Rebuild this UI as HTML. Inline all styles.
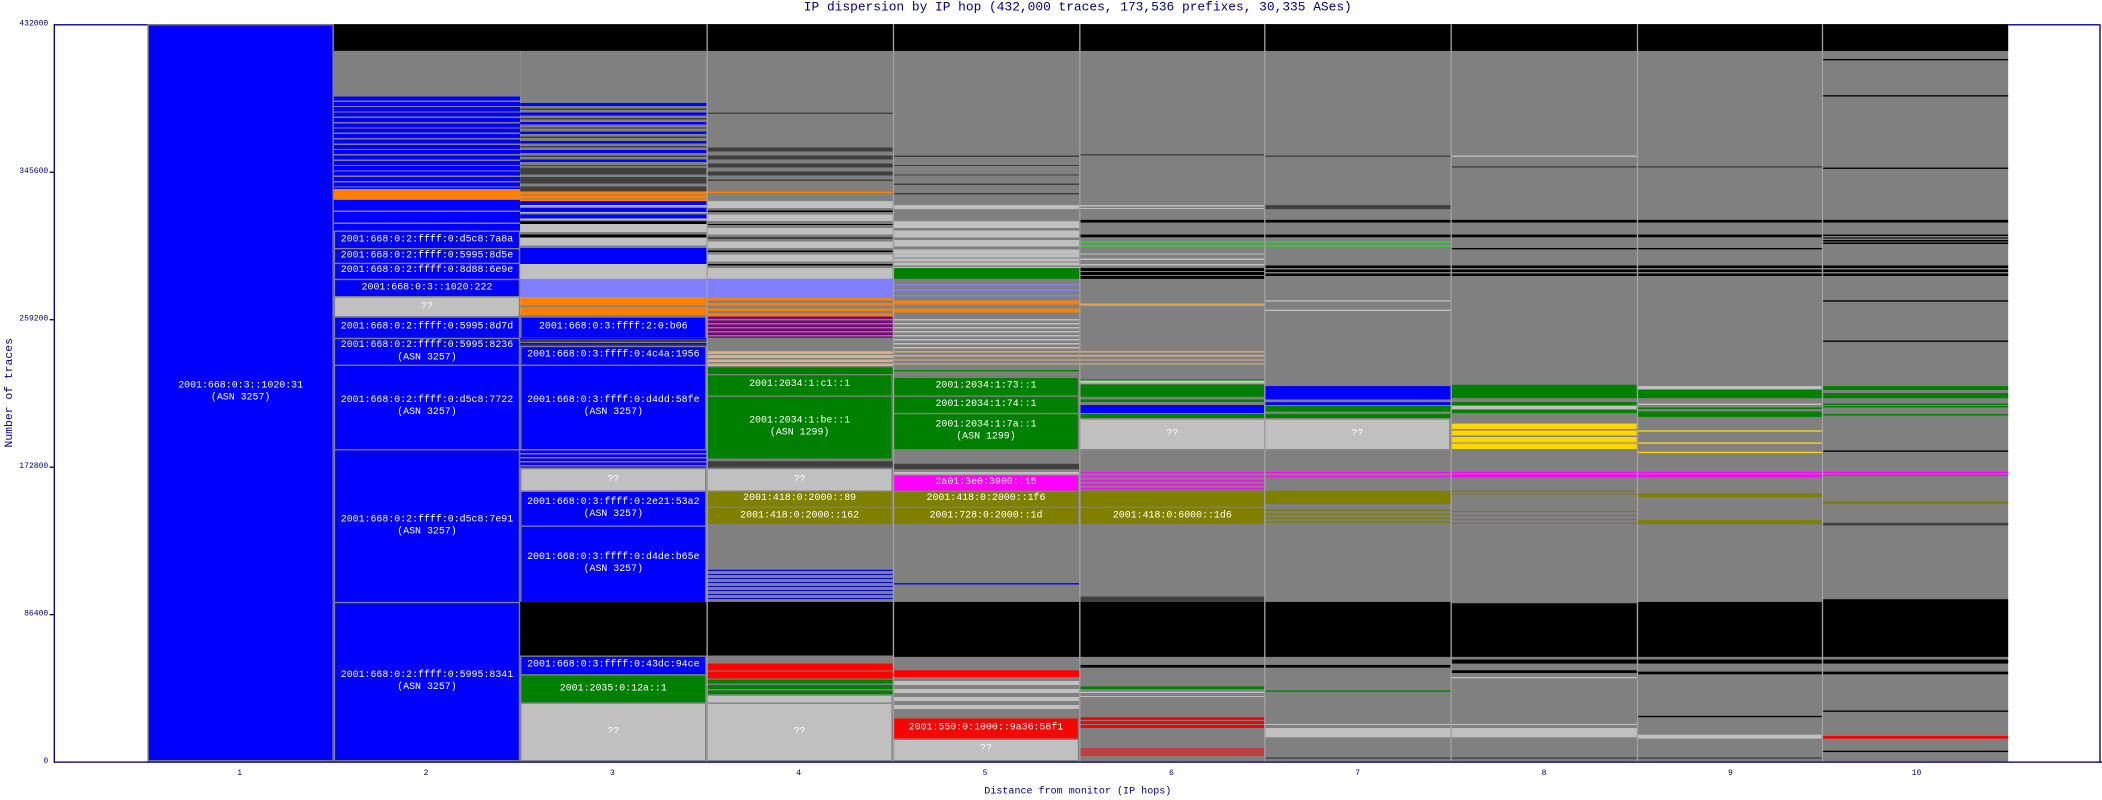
<!DOCTYPE html>
<html><head><meta charset="utf-8"><style>
html,body{margin:0;padding:0;background:#fff;overflow:hidden}
#w{width:2102px;height:800px;position:relative;overflow:hidden}
#s{position:absolute;left:0;top:0;width:1568px;height:597px;transform:scale(1.34056);transform-origin:0 0;font-family:"Liberation Mono",monospace}
.b{position:absolute}
.c{position:absolute;box-sizing:border-box;border:0.75px solid #808080;color:#fff;font-size:7.4px;line-height:9px;display:flex;align-items:center;justify-content:center;text-align:center;white-space:nowrap;overflow:hidden}
.ax{color:#000080;font-size:6px;position:absolute}
.t{color:#000080;font-size:8.5px;position:absolute;white-space:nowrap}
</style></head><body><div id="w"><div id="s">
<div class="t" style="left:40px;width:1528px;text-align:center;top:0px;font-size:9.6px">IP dispersion by IP hop (432,000 traces, 173,536 prefixes, 30,335 ASes)</div>
<div class="t" style="left:40px;width:1528px;text-align:center;top:587px;font-size:7.5px">Distance from monitor (IP hops)</div>
<div class="t" style="left:-38px;top:288px;transform:rotate(-90deg);width:90px;text-align:center">Number of traces</div>

<div class="b" style="left:527px;top:18px;width:971px;height:550px;background:#808080"></div>
<div class="b" style="left:249px;top:18px;width:1249px;height:20px;background:#000"></div>

<div class="c" style="left:110px;top:18px;width:139px;height:550px;background:#00f">2001:668:0:3::1020:31<br>(ASN 3257)</div>

<div class="b" style="left:249px;top:38px;width:139px;height:34px;background:#808080"></div>
<div class="b" style="left:249px;top:72px;width:139px;height:69px;background:repeating-linear-gradient(#00f 0 3px,#808080 3px 4px)"></div>
<div class="b" style="left:249px;top:141px;width:139px;height:8px;background:#ff8000"></div>
<div class="b" style="left:249px;top:149px;width:139px;height:23px;background:repeating-linear-gradient(#00f 0 8px,#808080 8px 9px)"></div>
<div class="c" style="left:249px;top:172px;width:139px;height:14px;background:#00f">2001:668:0:2:ffff:0:d5c8:7a8a</div>
<div class="c" style="left:249px;top:185px;width:139px;height:12px;background:#00f">2001:668:0:2:ffff:0:5995:8d5e</div>
<div class="c" style="left:249px;top:196px;width:139px;height:13px;background:#00f">2001:668:0:2:ffff:0:8d88:6e9e</div>
<div class="c" style="left:249px;top:208px;width:139px;height:14px;background:#00f">2001:668:0:3::1020:222</div>
<div class="c" style="left:249px;top:221px;width:139px;height:16px;background:#c0c0c0">??</div>
<div class="c" style="left:249px;top:236px;width:139px;height:17px;background:#00f">2001:668:0:2:ffff:0:5995:8d7d</div>
<div class="c" style="left:249px;top:252px;width:139px;height:21px;background:#00f">2001:668:0:2:ffff:0:5995:8236<br>(ASN 3257)</div>
<div class="c" style="left:249px;top:272px;width:139px;height:64px;background:#00f">2001:668:0:2:ffff:0:d5c8:7722<br>(ASN 3257)</div>
<div class="c" style="left:249px;top:335px;width:139px;height:115px;background:#00f">2001:668:0:2:ffff:0:d5c8:7e91<br>(ASN 3257)</div>
<div class="c" style="left:249px;top:449px;width:139px;height:119px;background:#00f">2001:668:0:2:ffff:0:5995:8341<br>(ASN 3257)</div>

<div class="b" style="left:388px;top:38px;width:139px;height:37px;background:#808080"></div>
<div class="b" style="left:388px;top:75px;width:139px;height:50px;background:repeating-linear-gradient(#808080 0 2px,#00f 2px 4px,#808080 4px 6px,#404040 6px 7px)"></div>
<div class="b" style="left:388px;top:125px;width:139px;height:18px;background:repeating-linear-gradient(#404040 0 5px,#808080 5px 7px)"></div>
<div class="b" style="left:388px;top:143px;width:139px;height:7px;background:repeating-linear-gradient(#ff8000 0 2px,#808080 2px 3px)"></div>
<div class="b" style="left:388px;top:150px;width:139px;height:15px;background:repeating-linear-gradient(#00f 0 3px,#c0c0c0 3px 4px,#808080 4px 5px)"></div>
<div class="b" style="left:388px;top:165px;width:139px;height:20px;background:repeating-linear-gradient(#000 0 2px,#c0c0c0 2px 8px,#808080 8px 10px)"></div>
<div class="b" style="left:388px;top:185px;width:139px;height:12px;background:#00f"></div>
<div class="b" style="left:388px;top:197px;width:139px;height:11px;background:#c0c0c0"></div>
<div class="b" style="left:388px;top:208px;width:139px;height:14px;background:#8080ff"></div>
<div class="b" style="left:388px;top:222px;width:139px;height:14px;background:repeating-linear-gradient(#ff8000 0 6px,#808080 6px 7px)"></div>
<div class="c" style="left:388px;top:236px;width:139px;height:17px;background:#00f">2001:668:0:3:ffff:2:0:b06</div>
<div class="b" style="left:388px;top:252px;width:139px;height:7px;background:repeating-linear-gradient(#00f 0 1px,#404040 1px 3px,#808080 3px 4px)"></div>
<div class="c" style="left:388px;top:258px;width:139px;height:15px;background:#00f">2001:668:0:3:ffff:0:4c4a:1956</div>
<div class="c" style="left:388px;top:272px;width:139px;height:64px;background:#00f">2001:668:0:3:ffff:0:d4dd:58fe<br>(ASN 3257)</div>
<div class="b" style="left:388px;top:335px;width:139px;height:14px;background:repeating-linear-gradient(#808080 0 1px,#00f 1px 3px)"></div>
<div class="c" style="left:388px;top:349px;width:139px;height:18px;background:#c0c0c0">??</div>
<div class="c" style="left:388px;top:366px;width:139px;height:27px;background:#00f">2001:668:0:3:ffff:0:2e21:53a2<br>(ASN 3257)</div>
<div class="c" style="left:388px;top:392px;width:139px;height:58px;background:#00f">2001:668:0:3:ffff:0:d4de:b65e<br>(ASN 3257)</div>
<div class="b" style="left:388px;top:449px;width:139px;height:40px;background:#000"></div>
<div class="c" style="left:388px;top:489px;width:139px;height:15px;background:#00f">2001:668:0:3:ffff:0:43dc:94ce</div>
<div class="c" style="left:388px;top:503px;width:139px;height:22px;background:#008000">2001:2035:0:12a::1</div>
<div class="c" style="left:388px;top:524px;width:139px;height:44px;background:#c0c0c0">??</div>

<div class="b" style="left:527px;top:84px;width:139px;height:1px;background:#404040"></div>
<div class="b" style="left:527px;top:110px;width:139px;height:25px;background:repeating-linear-gradient(#404040 0 3px,#808080 3px 6px)"></div>
<div class="b" style="left:527px;top:143px;width:139px;height:1px;background:#ff8000"></div>
<div class="b" style="left:527px;top:150px;width:139px;height:50px;background:repeating-linear-gradient(#c0c0c0 0 5px,#808080 5px 7px,#000 7px 8px,#808080 8px 10px)"></div>
<div class="b" style="left:527px;top:200px;width:139px;height:8px;background:#c0c0c0"></div>
<div class="b" style="left:527px;top:208px;width:139px;height:14px;background:#8080ff"></div>
<div class="b" style="left:527px;top:222px;width:139px;height:14px;background:repeating-linear-gradient(#ff8000 0 2px,#808080 2px 4px)"></div>
<div class="b" style="left:527px;top:236px;width:139px;height:16px;background:repeating-linear-gradient(#800080 0 2px,#808080 2px 3px)"></div>
<div class="b" style="left:527px;top:262px;width:139px;height:11px;background:repeating-linear-gradient(#d2b48c 0 2px,#808080 2px 3px)"></div>
<div class="b" style="left:527px;top:274px;width:139px;height:5px;background:#008000"></div>
<div class="c" style="left:527px;top:279px;width:139px;height:17px;background:#008000">2001:2034:1:c1::1</div>
<div class="c" style="left:527px;top:295px;width:139px;height:48px;background:#008000">2001:2034:1:be::1<br>(ASN 1299)</div>
<div class="b" style="left:527px;top:344px;width:139px;height:5px;background:#404040"></div>
<div class="c" style="left:527px;top:349px;width:139px;height:18px;background:#c0c0c0">??</div>
<div class="c" style="left:527px;top:366px;width:139px;height:13px;background:#808000">2001:418:0:2000::89</div>
<div class="c" style="left:527px;top:378px;width:139px;height:14px;background:#808000">2001:418:0:2000::162</div>
<div class="b" style="left:527px;top:425px;width:139px;height:24px;background:repeating-linear-gradient(#00f 0 1px,#808080 1px 3px)"></div>
<div class="b" style="left:527px;top:449px;width:139px;height:40px;background:#000"></div>
<div class="b" style="left:527px;top:495px;width:139px;height:12px;background:repeating-linear-gradient(#f00 0 5px,#808080 5px 6px)"></div>
<div class="b" style="left:527px;top:507px;width:139px;height:11px;background:repeating-linear-gradient(#008000 0 3px,#808080 3px 4px)"></div>
<div class="c" style="left:527px;top:518px;width:139px;height:7px;background:#c0c0c0"></div>
<div class="c" style="left:527px;top:524px;width:139px;height:44px;background:#c0c0c0">??</div>

<div class="b" style="left:666px;top:110px;width:139px;height:40px;background:repeating-linear-gradient(#808080 0 6px,#404040 6px 7px)"></div>
<div class="b" style="left:666px;top:153px;width:139px;height:3px;background:#c0c0c0"></div>
<div class="b" style="left:666px;top:165px;width:139px;height:25px;background:repeating-linear-gradient(#c0c0c0 0 5px,#808080 5px 7px)"></div>
<div class="b" style="left:666px;top:190px;width:139px;height:10px;background:repeating-linear-gradient(#c0c0c0 0 2px,#808080 2px 3px)"></div>
<div class="b" style="left:666px;top:200px;width:139px;height:8px;background:#008000"></div>
<div class="b" style="left:666px;top:212px;width:139px;height:10px;background:repeating-linear-gradient(#8080ff 0 1px,#808080 1px 4px)"></div>
<div class="b" style="left:666px;top:224px;width:139px;height:12px;background:repeating-linear-gradient(#ff8000 0 3px,#808080 3px 6px)"></div>
<div class="b" style="left:666px;top:238px;width:139px;height:22px;background:repeating-linear-gradient(#c0c0c0 0 1px,#808080 1px 3px)"></div>
<div class="b" style="left:666px;top:262px;width:139px;height:10px;background:repeating-linear-gradient(#d2b48c 0 1px,#808080 1px 3px)"></div>
<div class="b" style="left:666px;top:276px;width:139px;height:1px;background:#008000"></div>
<div class="c" style="left:666px;top:281px;width:139px;height:15px;background:#008000">2001:2034:1:73::1</div>
<div class="c" style="left:666px;top:295px;width:139px;height:14px;background:#008000">2001:2034:1:74::1</div>
<div class="c" style="left:666px;top:308px;width:139px;height:28px;background:#008000">2001:2034:1:7a::1<br>(ASN 1299)</div>
<div class="b" style="left:666px;top:346px;width:139px;height:4px;background:#404040"></div>
<div class="b" style="left:666px;top:352px;width:139px;height:2px;background:#c0c0c0"></div>
<div class="c" style="left:666px;top:354px;width:139px;height:13px;background:#f0f">2a01:3e0:3900::15</div>
<div class="c" style="left:666px;top:366px;width:139px;height:13px;background:#808000">2001:418:0:2000::1f6</div>
<div class="c" style="left:666px;top:378px;width:139px;height:14px;background:#808000">2001:728:0:2000::1d</div>
<div class="b" style="left:666px;top:435px;width:139px;height:1px;background:#00f"></div>
<div class="b" style="left:666px;top:449px;width:139px;height:41px;background:#000"></div>
<div class="b" style="left:666px;top:500px;width:139px;height:5px;background:#f00"></div>
<div class="b" style="left:666px;top:508px;width:139px;height:22px;background:repeating-linear-gradient(#c0c0c0 0 3px,#808080 3px 6px)"></div>
<div class="c" style="left:666px;top:535px;width:139px;height:17px;background:#f00">2001:550:0:1000::9a36:58f1</div>
<div class="c" style="left:666px;top:551px;width:139px;height:17px;background:#c0c0c0">??</div>

<div class="b" style="left:805px;top:115px;width:139px;height:1px;background:#404040"></div>
<div class="b" style="left:805px;top:153px;width:139px;height:3px;background:repeating-linear-gradient(#c0c0c0 0 1px,#808080 1px 2px)"></div>
<div class="b" style="left:805px;top:164px;width:139px;height:2px;background:#000"></div>
<div class="b" style="left:805px;top:175px;width:139px;height:2px;background:#000"></div>
<div class="b" style="left:805px;top:180px;width:139px;height:6px;background:repeating-linear-gradient(#00ff00 0 1px,#808080 1px 3px)"></div>
<div class="b" style="left:805px;top:189px;width:139px;height:11px;background:repeating-linear-gradient(#c0c0c0 0 1px,#808080 1px 4px)"></div>
<div class="b" style="left:805px;top:200px;width:139px;height:8px;background:repeating-linear-gradient(#000 0 2px,#808080 2px 3px)"></div>
<div class="b" style="left:805px;top:226px;width:139px;height:4px;background:repeating-linear-gradient(#ff8000 0 1px,#c0c0c0 1px 2px,#808080 2px 4px)"></div>
<div class="b" style="left:805px;top:262px;width:139px;height:10px;background:repeating-linear-gradient(#d2b48c 0 1px,#808080 1px 3px)"></div>
<div class="b" style="left:805px;top:283px;width:139px;height:13px;background:linear-gradient(#008000 0 1px,#c0c0c0 1px 3px,#808080 3px 4px,#008000 4px 13px)"></div>
<div class="b" style="left:805px;top:298px;width:139px;height:14px;background:linear-gradient(#008000 0 2px,#808080 2px 4px,#00f 4px 10px,#808080 10px 11px,#008000 11px 14px)"></div>
<div class="c" style="left:805px;top:312px;width:139px;height:24px;background:#c0c0c0">??</div>
<div class="b" style="left:805px;top:352px;width:139px;height:14px;background:repeating-linear-gradient(#f00ff0 0 1px,#808080 1px 3px)"></div>
<div class="b" style="left:805px;top:366px;width:139px;height:12px;background:#808000"></div>
<div class="c" style="left:805px;top:378px;width:139px;height:14px;background:#808000">2001:418:0:6000::1d6</div>
<div class="b" style="left:805px;top:445px;width:139px;height:4px;background:#404040"></div>
<div class="b" style="left:805px;top:449px;width:139px;height:41px;background:#000"></div>
<div class="b" style="left:805px;top:496px;width:139px;height:2px;background:#000"></div>
<div class="b" style="left:805px;top:512px;width:139px;height:2px;background:#008000"></div>
<div class="b" style="left:805px;top:516px;width:139px;height:6px;background:repeating-linear-gradient(#c0c0c0 0 1px,#808080 1px 3px)"></div>
<div class="b" style="left:805px;top:535px;width:139px;height:9px;background:repeating-linear-gradient(#f00 0 2px,#808080 2px 3px)"></div>
<div class="b" style="left:805px;top:558px;width:139px;height:6px;background:#c04040"></div>

<div class="b" style="left:943px;top:116px;width:139px;height:1px;background:#404040"></div>
<div class="b" style="left:943px;top:153px;width:139px;height:3px;background:#404040"></div>
<div class="b" style="left:943px;top:164px;width:139px;height:2px;background:#000"></div>
<div class="b" style="left:943px;top:175px;width:139px;height:2px;background:#000"></div>
<div class="b" style="left:943px;top:180px;width:139px;height:6px;background:repeating-linear-gradient(#00ff00 0 1px,#808080 1px 3px)"></div>
<div class="b" style="left:943px;top:198px;width:139px;height:8px;background:repeating-linear-gradient(#000 0 2px,#808080 2px 3px)"></div>
<div class="b" style="left:943px;top:224px;width:139px;height:1px;background:#c0c0c0"></div>
<div class="b" style="left:943px;top:231px;width:139px;height:1px;background:#c0c0c0"></div>
<div class="b" style="left:943px;top:288px;width:139px;height:10px;background:#00f"></div>
<div class="b" style="left:943px;top:300px;width:139px;height:12px;background:linear-gradient(#00f 0 2px,#808080 2px 3px,#008000 3px 7px,#808080 7px 9px,#008000 9px 12px)"></div>
<div class="c" style="left:943px;top:312px;width:139px;height:24px;background:#c0c0c0">??</div>
<div class="b" style="left:943px;top:352px;width:139px;height:6px;background:repeating-linear-gradient(#f0f 0 1px,#808080 1px 3px)"></div>
<div class="b" style="left:943px;top:366px;width:139px;height:10px;background:#808000"></div>
<div class="b" style="left:943px;top:380px;width:139px;height:10px;background:repeating-linear-gradient(#808000 0 1px,#808080 1px 3px)"></div>
<div class="b" style="left:943px;top:449px;width:139px;height:41px;background:#000"></div>
<div class="b" style="left:943px;top:496px;width:139px;height:2px;background:#000"></div>
<div class="b" style="left:943px;top:515px;width:139px;height:1px;background:#008000"></div>
<div class="b" style="left:943px;top:540px;width:139px;height:10px;background:linear-gradient(#c0c0c0 0 1px,#808080 1px 3px,#c0c0c0 3px 10px)"></div>
<div class="b" style="left:943px;top:565px;width:139px;height:1px;background:#404040"></div>

<div class="b" style="left:1082px;top:116px;width:139px;height:1px;background:#c0c0c0"></div>
<div class="b" style="left:1082px;top:124px;width:139px;height:1px;background:#404040"></div>
<div class="b" style="left:1082px;top:164px;width:139px;height:2px;background:#000"></div>
<div class="b" style="left:1082px;top:175px;width:139px;height:2px;background:#000"></div>
<div class="b" style="left:1082px;top:185px;width:139px;height:1px;background:#000"></div>
<div class="b" style="left:1082px;top:198px;width:139px;height:8px;background:repeating-linear-gradient(#000 0 2px,#808080 2px 3px)"></div>
<div class="b" style="left:1082px;top:287px;width:139px;height:10px;background:#008000"></div>
<div class="b" style="left:1082px;top:300px;width:139px;height:11px;background:linear-gradient(#008000 0 2px,#808080 2px 3px,#c0c0c0 3px 5px,#808080 5px 6px,#008000 6px 8px,#808080 8px 11px)"></div>
<div class="b" style="left:1082px;top:316px;width:139px;height:19px;background:repeating-linear-gradient(#ffd700 0 4px,#808080 4px 5px)"></div>
<div class="b" style="left:1082px;top:352px;width:139px;height:4px;background:linear-gradient(#f0f 0 1px,#808080 1px 2px,#f0f 2px 4px)"></div>
<div class="b" style="left:1082px;top:366px;width:139px;height:4px;background:repeating-linear-gradient(#808000 0 1px,#808080 1px 2px)"></div>
<div class="b" style="left:1082px;top:381px;width:139px;height:10px;background:repeating-linear-gradient(#808000 0 1px,#808080 1px 3px)"></div>
<div class="b" style="left:1082px;top:450px;width:139px;height:40px;background:#000"></div>
<div class="b" style="left:1082px;top:492px;width:139px;height:3px;background:#000"></div>
<div class="b" style="left:1082px;top:500px;width:139px;height:2px;background:#000"></div>
<div class="b" style="left:1082px;top:505px;width:139px;height:1px;background:#c0c0c0"></div>
<div class="b" style="left:1082px;top:540px;width:139px;height:10px;background:linear-gradient(#c0c0c0 0 1px,#808080 1px 3px,#c0c0c0 3px 10px)"></div>
<div class="b" style="left:1082px;top:565px;width:139px;height:1px;background:#404040"></div>

<div class="b" style="left:1221px;top:124px;width:139px;height:1px;background:#404040"></div>
<div class="b" style="left:1221px;top:164px;width:139px;height:2px;background:#000"></div>
<div class="b" style="left:1221px;top:175px;width:139px;height:2px;background:#000"></div>
<div class="b" style="left:1221px;top:185px;width:139px;height:1px;background:#000"></div>
<div class="b" style="left:1221px;top:198px;width:139px;height:8px;background:repeating-linear-gradient(#000 0 2px,#808080 2px 3px)"></div>
<div class="b" style="left:1221px;top:288px;width:139px;height:9px;background:linear-gradient(#c0c0c0 0 2px,#808080 2px 3px,#008000 3px 9px)"></div>
<div class="b" style="left:1221px;top:301px;width:139px;height:10px;background:linear-gradient(#c0c0c0 0 1px,#808080 1px 3px,#008000 3px 4px,#808080 4px 6px,#008000 6px 8px)"></div>
<div class="b" style="left:1221px;top:321px;width:139px;height:1px;background:#ffd700"></div>
<div class="b" style="left:1221px;top:330px;width:139px;height:1px;background:#ffd700"></div>
<div class="b" style="left:1221px;top:337px;width:139px;height:1px;background:#ffd700"></div>
<div class="b" style="left:1221px;top:352px;width:139px;height:4px;background:linear-gradient(#f0f 0 1px,#808080 1px 2px,#f0f 2px 4px)"></div>
<div class="b" style="left:1221px;top:368px;width:139px;height:3px;background:#808000"></div>
<div class="b" style="left:1221px;top:388px;width:139px;height:3px;background:#808000"></div>
<div class="b" style="left:1221px;top:449px;width:139px;height:41px;background:#000"></div>
<div class="b" style="left:1221px;top:492px;width:139px;height:3px;background:#000"></div>
<div class="b" style="left:1221px;top:501px;width:139px;height:2px;background:#000"></div>
<div class="b" style="left:1221px;top:534px;width:139px;height:1px;background:#000"></div>
<div class="b" style="left:1221px;top:548px;width:139px;height:3px;background:#c0c0c0"></div>
<div class="b" style="left:1221px;top:565px;width:139px;height:1px;background:#404040"></div>

<div class="b" style="left:1359px;top:44px;width:139px;height:1px;background:#000"></div>
<div class="b" style="left:1359px;top:71px;width:139px;height:1px;background:#000"></div>
<div class="b" style="left:1359px;top:125px;width:139px;height:1px;background:#000"></div>
<div class="b" style="left:1359px;top:164px;width:139px;height:2px;background:#000"></div>
<div class="b" style="left:1359px;top:175px;width:139px;height:8px;background:repeating-linear-gradient(#000 0 1px,#808080 1px 2px)"></div>
<div class="b" style="left:1359px;top:198px;width:139px;height:8px;background:repeating-linear-gradient(#000 0 2px,#808080 2px 3px)"></div>
<div class="b" style="left:1359px;top:224px;width:139px;height:1px;background:#000"></div>
<div class="b" style="left:1359px;top:254px;width:139px;height:1px;background:#000"></div>
<div class="b" style="left:1359px;top:288px;width:139px;height:9px;background:linear-gradient(#008000 0 3px,#808080 3px 5px,#008000 5px 9px)"></div>
<div class="b" style="left:1359px;top:301px;width:139px;height:10px;background:linear-gradient(#008000 0 1px,#808080 1px 2px,#008000 2px 3px,#808080 3px 8px,#008000 8px 9px,#808080 9px 10px)"></div>
<div class="b" style="left:1359px;top:336px;width:139px;height:1px;background:#000"></div>
<div class="b" style="left:1359px;top:352px;width:139px;height:3px;background:linear-gradient(#f0f 0 1px,#808080 1px 2px,#f0f 2px 3px)"></div>
<div class="b" style="left:1359px;top:374px;width:139px;height:2px;background:#808000"></div>
<div class="b" style="left:1359px;top:390px;width:139px;height:2px;background:#404040"></div>
<div class="b" style="left:1359px;top:447px;width:139px;height:43px;background:#000"></div>
<div class="b" style="left:1359px;top:492px;width:139px;height:3px;background:#000"></div>
<div class="b" style="left:1359px;top:501px;width:139px;height:2px;background:#000"></div>
<div class="b" style="left:1359px;top:530px;width:139px;height:1px;background:#000"></div>
<div class="b" style="left:1359px;top:549px;width:139px;height:2px;background:#f00"></div>
<div class="b" style="left:1359px;top:560px;width:139px;height:1px;background:#000"></div>

<div class="b" style="left:527px;top:18px;width:0.75px;height:550px;background:#a0a0a0"></div>
<div class="b" style="left:666px;top:18px;width:0.75px;height:550px;background:#a0a0a0"></div>
<div class="b" style="left:805px;top:18px;width:0.75px;height:550px;background:#a0a0a0"></div>
<div class="b" style="left:943px;top:18px;width:0.75px;height:550px;background:#a0a0a0"></div>
<div class="b" style="left:1082px;top:18px;width:0.75px;height:550px;background:#a0a0a0"></div>
<div class="b" style="left:1221px;top:18px;width:0.75px;height:550px;background:#a0a0a0"></div>
<div class="b" style="left:1359px;top:18px;width:0.75px;height:550px;background:#a0a0a0"></div>

<div class="b" style="left:40px;top:18px;width:1px;height:551px;background:#000080"></div>
<div class="b" style="left:40px;top:18px;width:70px;height:1px;background:#000080"></div>
<div class="b" style="left:40px;top:568px;width:1528px;height:1px;background:#000080"></div>
<div class="b" style="left:1566px;top:18px;width:1px;height:551px;background:#000080"></div>
<div class="b" style="left:1498px;top:18px;width:68px;height:1px;background:#000080"></div>
<div class="b" style="left:37px;top:128px;width:3px;height:1px;background:#000080"></div>
<div class="b" style="left:37px;top:238px;width:3px;height:1px;background:#000080"></div>
<div class="b" style="left:37px;top:348px;width:3px;height:1px;background:#000080"></div>
<div class="b" style="left:37px;top:458px;width:3px;height:1px;background:#000080"></div>
<div class="ax" style="right:1532px;top:14px">432000</div>
<div class="ax" style="right:1532px;top:124px">345600</div>
<div class="ax" style="right:1532px;top:234px">259200</div>
<div class="ax" style="right:1532px;top:344px">172800</div>
<div class="ax" style="right:1532px;top:454px">86400</div>
<div class="ax" style="right:1532px;top:564px">0</div>
<div class="ax" style="left:177px;top:573px">1</div>
<div class="ax" style="left:316px;top:573px">2</div>
<div class="ax" style="left:455px;top:573px">3</div>
<div class="ax" style="left:594px;top:573px">4</div>
<div class="ax" style="left:733px;top:573px">5</div>
<div class="ax" style="left:872px;top:573px">6</div>
<div class="ax" style="left:1011px;top:573px">7</div>
<div class="ax" style="left:1150px;top:573px">8</div>
<div class="ax" style="left:1289px;top:573px">9</div>
<div class="ax" style="left:1426px;top:573px">10</div>
</div></div></body></html>
